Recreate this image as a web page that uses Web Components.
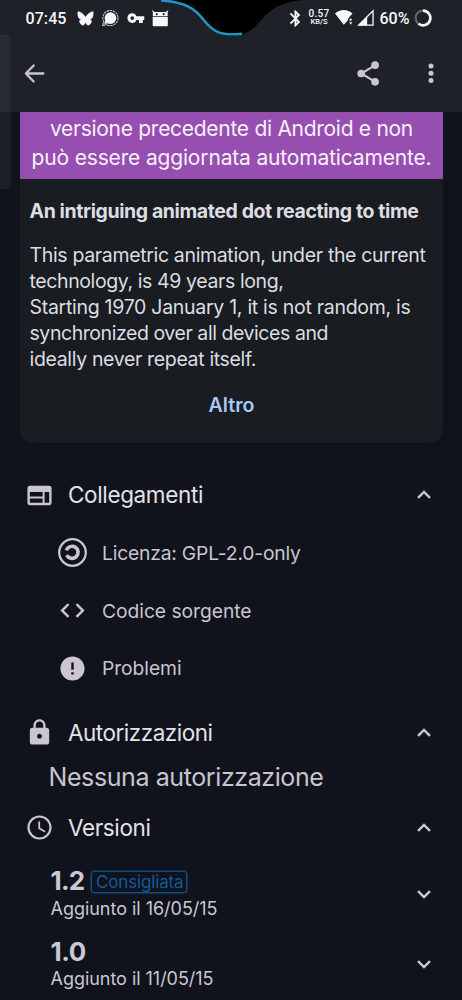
<!DOCTYPE html>
<html lang="it">
<head>
<meta charset="utf-8">
<title>Dettagli app</title>
<style>
html,body{margin:0;background:#10131b}
body{width:462px;height:1000px;overflow:hidden;font-family:Inter,"Liberation Sans",sans-serif;color:#dddde2}
</style>
</head>
<body>
<app-screen></app-screen>
<script>
const define=(name,html,setup)=>customElements.define(name,class extends HTMLElement{
  constructor(){super();this.attachShadow({mode:'open'}).innerHTML=html}
  connectedCallback(){if(setup)setup.call(this,this.shadowRoot)}
});

const glyphs={
  back:'<path d="M20.500 12H4.400M11.200 4.300 3.700 12l7.500 7.700" fill="none" stroke="currentColor" stroke-width="2.200" stroke-linecap="round" stroke-linejoin="round"/>',
  share:'<path d="M18 4.200 5.200 12 18 19.800" fill="none" stroke="currentColor" stroke-width="2"/><circle cx="18.300" cy="4" r="3.700"/><circle cx="5" cy="12" r="3.700"/><circle cx="18.300" cy="20" r="3.700"/>',
  more:'<circle cx="12" cy="5" r="2.500"/><circle cx="12" cy="12.200" r="2.500"/><circle cx="12" cy="19.400" r="2.500"/>',
  web:'<path d="M20 4H4c-1.100 0-1.990.9-1.990 2L2 18c0 1.100.9 2 2 2h16c1.100 0 2-.9 2-2V6c0-1.100-.9-2-2-2zm-5.400 14H4v-3.600h10.600V18zm0-5.200H4V9.200h10.600v3.600zM20 18h-3.800V9.200H20V18z"/>',
  copyleft:'<g fill="none" stroke="currentColor"><circle cx="12" cy="12" r="11" stroke-width="1.900"/><path d="M6.900 10.200A5 5 0 1 1 7.200 14.200" stroke-width="3"/></g>',
  code:'<path d="M9.400 16.600 4.800 12l4.600-4.600L8 6l-6 6 6 6 1.400-1.400zm5.200 0 4.600-4.600-4.600-4.600L16 6l6 6-6 6-1.400-1.400z"/>',
  error:'<path d="M12 2C6.480 2 2 6.480 2 12s4.480 10 10 10 10-4.480 10-10S17.520 2 12 2zm1 15h-2v-2h2v2zm0-4h-2V7h2v6z"/>',
  lock:'<path d="M18 8h-1V6c0-2.760-2.240-5-5-5S7 3.240 7 6v2H6c-1.100 0-2 .9-2 2v10c0 1.100.9 2 2 2h12c1.100 0 2-.9 2-2V10c0-1.100-.9-2-2-2zm-6 9c-1.100 0-2-.9-2-2s.9-2 2-2 2 .9 2 2-.9 2-2 2zm3.100-9H8.900V6c0-1.710 1.390-3.100 3.100-3.100s3.100 1.390 3.100 3.100v2z"/>',
  clock:'<path d="M11.990 2C6.470 2 2 6.480 2 12s4.470 10 9.990 10C17.520 22 22 17.520 22 12S17.520 2 11.990 2zM12 20.200a8.200 8.200 0 1 1 0-16.400 8.200 8.200 0 0 1 0 16.400zm.5-13.200H11v6l5.250 3.150.75-1.230-4.500-2.670z"/>',
  up:'<path d="m6.900 14.500 5.100-5.100 5.100 5.100" fill="none" stroke="currentColor" stroke-width="2.100"/>',
  down:'<path d="m6.900 9.500 5.100 5.100 5.100-5.100" fill="none" stroke="currentColor" stroke-width="2.100"/>',
  butterfly:'<path d="M12 10.300C9.800 6.500 5.500 2.800 2 2.300c-1.200 0-1 5 .4 8.300.6 1.600 2.200 2.300 4.200 2.400-2.700.7-3.600 2.500-2.300 5 2 3.900 5.600 5.400 7.700-1.500 2.100 6.900 5.700 5.400 7.700 1.500 1.300-2.500.4-4.300-2.300-5 2-.1 3.600-.8 4.200-2.400 1.400-3.300 1.600-8.300.4-8.300-3.500.5-7.800 4.200-10 8z" stroke="currentColor"/>',
  signal:'<circle cx="12.300" cy="11.700" r="8.500"/><path d="m3.500 20.500 2-7 5.500 5.500z"/><circle cx="12.300" cy="11.700" r="11" fill="none" stroke="#c3c5ca" stroke-width="1.600" stroke-dasharray="3.600 1"/><path d="M2 17.500 1 22.500l5-1" fill="none" stroke="#c3c5ca" stroke-width="1.600"/>',
  key:'<path d="M12.650 9.500C11.830 7.170 9.610 5.500 7 5.500a6.500 6.500 0 0 0 0 13c2.610 0 4.830-1.670 5.650-4H16v4h5v-4h2v-5H12.650zM7 14.500a2.500 2.500 0 1 1 0-5 2.500 2.500 0 0 1 0 5z"/>',
  droid:'<path d="M0 0 4 3h16L24 0l-1.200 3v6H1.200V3zM1 10.200h22v12c0 1-.6 1.500-1.500 1.500h-19C1.600 23.700 1 23 1 22z"/><circle cx="7" cy="6" r="1.500" fill="#1e2128"/><circle cx="17" cy="6" r="1.500" fill="#1e2128"/>',
  bluetooth:'<path d="M17.710 7.710 12 2h-1v7.590L6.410 5 5 6.410 10.590 12 5 17.590 6.410 19 11 14.410V22h1l5.710-5.710-4.300-4.290 4.300-4.290zM13 5.830l1.880 1.880L13 9.590V5.830zm1.880 10.460L13 18.170v-3.760l1.880 1.880z" stroke="currentColor" stroke-width=".5"/>',
  wifi:'<path d="M0 6.200C6.500-.3 17.500-.3 24 6.200L18.500 12.500l-1 3.200L12 21.500z"/><path d="m21.500 12.500 2.200 3.200h-4.400zM21.500 21.500l2.200-3.200h-4.400z"/>',
  cell:'<path d="M2.500 22 22 2.500V22z" fill="none" stroke="currentColor" stroke-width="1.800"/><path d="M2 22.500 14 10.500v12z"/>',
  battery:'<circle cx="12" cy="12" r="9.800" fill="none" stroke="#61646b" stroke-width="3"/><path d="M12 2.200a9.800 9.800 0 1 1-5.900 17.600" fill="none" stroke="currentColor" stroke-width="3.400"/>'
};

define('ui-icon','',function(r){
  const s=this.getAttribute('size')||29;
  r.innerHTML=`<style>:host{display:block;flex:none}svg{display:block;overflow:visible}</style><svg width="${s}" height="${s}" viewBox="0 0 24 24" fill="currentColor">${glyphs[this.getAttribute('name')]||''}</svg>`;
});

/* A single line whose tracking is tuned so that it fills the given width. */
define('ui-line','<style>:host{display:block;white-space:nowrap;width:max-content}span{display:inline-block}</style><span><slot></slot></span>',function(r){
  const span=r.querySelector('span'),w=+this.getAttribute('w'),n=this.textContent.length;
  span.style.letterSpacing=(w-span.getBoundingClientRect().width)/n+'px';
});

define('status-bar',`<style>
:host{display:flex;height:36px;box-sizing:border-box;padding:0 30px 0 25.500px;align-items:center;justify-content:space-between;position:relative;color:#f7f7fa;font:500 16px/20px Roboto,sans-serif}
.g{display:flex;align-items:center}
.g>ui-line{margin-top:1px}
.notch{position:absolute;left:155px;top:0}
.rate{display:grid;justify-items:center;font-size:10px;line-height:9px;margin:-1px 5px 0 6px}
.rate ui-line+ui-line{font-size:7.500px;line-height:8px}
</style>
<svg class="notch" width="160" height="40"><path d="M6 0C31 1 41 10 49 20 59 32 65 36 78 36 94 35 101 26 108 18 119 6 131 1 151 0z" fill="#000"/><path d="M6 .5C31 2 40 9 48 19 58 32 65 36 87 33.800" fill="none" stroke="#2096c4" stroke-width="2.600"/></svg>
<div class="g"><ui-line w="41">07:45</ui-line><ui-icon name="butterfly" size="17" style="margin-left:10px"></ui-icon><ui-icon name="signal" size="16.500" style="margin-left:8px"></ui-icon><ui-icon name="key" size="18" style="margin-left:8.500px"></ui-icon><ui-icon name="droid" size="16.500" style="margin-left:7.500px"></ui-icon></div>
<div class="g"><ui-icon name="bluetooth" size="19" style="margin-right:-2px"></ui-icon><div class="rate"><ui-line w="21">0.57</ui-line><ui-line w="17">KB/S</ui-line></div><ui-icon name="wifi" size="17.500"></ui-icon><ui-icon name="cell" size="17.500" style="margin-left:4.500px"></ui-icon><ui-line w="30" style="margin-left:5.500px">60%</ui-line><ui-icon name="battery" size="18" style="margin-left:4.500px"></ui-icon></div>`);

define('app-bar',`<style>
:host{display:flex;height:74px;align-items:center;padding:0 19px 0 22px;color:#cac5d1}
span{flex:1}ui-icon+ui-icon{margin-left:38px}
</style><ui-icon name="back" size="25"></ui-icon><span></span><ui-icon name="share" size="25"></ui-icon><ui-icon name="more" size="24"></ui-icon>`);

define('app-card',`<style>
:host{display:block;margin:0 19px 0 20px;height:331px;background:#191c21;border-radius:0 0 14px 14px;overflow:hidden}
.banner{background:#964fb1;color:#fbeefe;height:67px;padding-top:1.500px;box-sizing:border-box;font-size:21px;line-height:29px;display:grid;justify-items:center;align-content:start}
.body{padding:20px 9.500px 0;font-size:19.500px;line-height:26px}
.title{font-weight:700;font-size:19.500px;line-height:24px;margin-bottom:19px}
.more{margin:21px auto 0;font-weight:600;font-size:19.500px;line-height:24px;color:#a9c7fb}
</style>
<div class="banner"><ui-line w="363">versione precedente di Android e non</ui-line><ui-line w="400">può essere aggiornata automaticamente.</ui-line></div>
<div class="body"><ui-line class="title" w="389">An intriguing animated dot reacting to time</ui-line>
<ui-line w="396">This parametric animation, under the current</ui-line><ui-line w="254">technology, is 49 years long,</ui-line><ui-line w="381">Starting 1970 January 1, it is not random, is</ui-line><ui-line w="298.500">synchronized over all devices and</ui-line><ui-line w="226.500">ideally never repeat itself.</ui-line>
<ui-line class="more" w="46">Altro</ui-line></div>`);

define('section-head',`<style>
:host{display:flex;height:30px;align-items:center;padding:0 24px 0 24.500px;font-size:22.500px;line-height:30px;color:#e3e1e9}
ui-icon{color:#cac5d1}.t{flex:1;margin-left:14.500px}
</style><ui-icon></ui-icon><div class="t"><slot></slot></div><ui-icon name="up" size="28"></ui-icon>`,function(r){
  const i=r.querySelector('ui-icon');i.setAttribute('name',this.getAttribute('icon'));i.connectedCallback();
});

define('link-row',`<style>
:host{display:flex;height:57.700px;align-items:center;font-size:19.300px;line-height:26px;color:#c9c5d0;padding-left:58px}
ui-icon{color:#cac5d1}.t{margin:.3px 0 0 15px}
</style><ui-icon></ui-icon><div class="t"><slot></slot></div>`,function(r){
  const i=r.querySelector('ui-icon');i.setAttribute('name',this.getAttribute('icon'));i.connectedCallback();
});

define('version-row',`<style>
:host{display:flex;align-items:center;height:53px;margin-bottom:17.200px;padding:0 24px 0 50.500px;color:#cbc7d3}
.c{flex:1}.n{display:flex;height:29px;align-items:center;font-weight:700;font-size:26px;line-height:28px}
.d{font-size:18px;line-height:25px}
</style><div class="c"><div class="n"><slot name="number"></slot><slot name="tag"></slot></div><div class="d"><slot></slot></div></div><ui-icon name="down" size="28"></ui-icon>`);

define('version-tag',`<style>
:host{display:block;box-sizing:border-box;width:96px;height:22px;border:1.500px solid #0f4f8c;border-radius:3px;padding-left:4px;margin:1px 0 0 6.500px;font-weight:400;font-size:17px;line-height:20px;color:#0f5a9e;box-shadow:0 0 0 .5px #0f4f8c}
</style><slot></slot>`);

define('app-screen',`<style>
:host{display:block;width:462px;height:1000px;overflow:hidden;position:relative;background:#10131b}
header{background:#1e2128;height:112px}
.edge{position:absolute;left:0;top:35px;width:11px;height:154px;border-radius:0 5px 5px 0;background:rgba(120,130,145,.11)}
.none{font-size:25px;line-height:30px;margin:14px 0 21px 48.500px;color:#c9c5d0}
</style>
<header><status-bar></status-bar><app-bar></app-bar></header>
<main>
<app-card></app-card>
<section-head icon="web" style="margin-top:37px"><ui-line w="135">Collegamenti</ui-line></section-head>
<div style="padding:14px 0 20.800px">
<link-row icon="copyleft"><ui-line w="198">Licenza: GPL-2.0-only</ui-line></link-row>
<link-row icon="code"><ui-line w="149.500">Codice sorgente</ui-line></link-row>
<link-row icon="error"><ui-line w="79.500">Problemi</ui-line></link-row>
</div>
<section-head icon="lock"><ui-line w="144.500">Autorizzazioni</ui-line></section-head>
<ui-line class="none" w="275">Nessuna autorizzazione</ui-line>
<section-head icon="clock" style="margin-bottom:24.500px"><ui-line w="82.500">Versioni</ui-line></section-head>
<version-row><ui-line slot="number" w="34">1.2</ui-line><version-tag slot="tag"><ui-line w="87.500">Consigliata</ui-line></version-tag><ui-line w="167">Aggiunto il 16/05/15</ui-line></version-row>
<version-row><ui-line slot="number" w="35.500">1.0</ui-line><ui-line w="163">Aggiunto il 11/05/15</ui-line></version-row>
</main>
<div class="edge"></div>`);
</script>
</body>
</html>
